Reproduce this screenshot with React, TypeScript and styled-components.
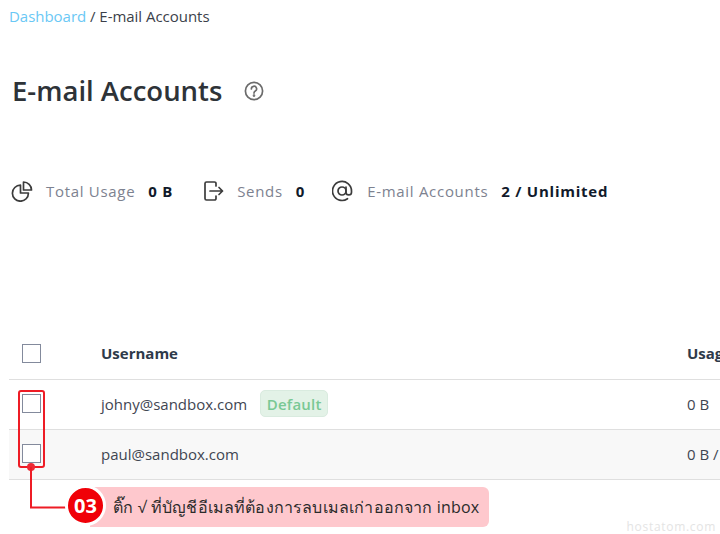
import React from "react";
import styled, { createGlobalStyle } from "styled-components";

const Global = createGlobalStyle`
  html, body { margin: 0; padding: 0; background: #fff; }
  body { font-family: "Open Sans", sans-serif; color: #2e3238; }
  * { box-sizing: border-box; }
`;

const Page = styled.div`
  position: relative;
  width: 720px;
  height: 534px;
  overflow: hidden;
  padding: 6px 0 0 9px;
`;
const Crumbs = styled.div`
  font-size: 15px;
  line-height: 20px;
  letter-spacing: -0.03px;
  color: #3b3f4a;
`;
const CrumbLink = styled.a`
  color: #6ac8f5;
`;
const TitleRow = styled.div`
  display: flex;
  align-items: center;
  gap: 22px;
  margin: 45px 0 0 3px;
  height: 40px;
`;
const Title = styled.h1`
  margin: 0;
  font-size: 27.5px;
  font-weight: 600;
  line-height: 40px;
  color: #2e3338;
`;
const HelpIcon = styled.svg`
  width: 20px;
  height: 20px;
  color: #6b6b6b;
`;
const Stats = styled.div`
  display: flex;
  align-items: center;
  margin: 68px 0 0 2px;
  height: 24px;
  font-size: 15px;
  letter-spacing: 0.7px;
`;
const Stat = styled.div<{ $gap: number }>`
  display: flex;
  align-items: center;
  margin-right: ${(p) => p.$gap}px;
`;
const StatIcon = styled.svg`
  width: 22px;
  height: 22px;
  color: #3c3c3c;
  margin-right: 13px;
  flex: none;
`;
const StatLabel = styled.span`
  color: #7d8290;
  margin-right: 13px;
`;
const StatValue = styled.b`
  font-weight: 700;
  font-size: 15px;
  letter-spacing: 0.75px;
  color: #111a2b;
`;
const Table = styled.div`
  width: 900px;
  margin-top: 126px;
  font-size: 15px;
`;
const Row = styled.div<{ $head?: boolean; $shaded?: boolean }>`
  display: grid;
  grid-template-columns: 92px 586px 1fr;
  align-items: center;
  height: ${(p) => (p.$head ? 51 : 50)}px;
  padding-bottom: 2px;
  border-bottom: 1px solid #dfdfdf;
  background: ${(p) => (p.$shaded ? "#f8f8f8" : "transparent")};
  font-weight: ${(p) => (p.$head ? 700 : 400)};
  color: ${(p) => (p.$head ? "#2e3a4a" : "#3f4652")};
`;
const CheckCell = styled.div`
  padding-left: 13px;
  display: flex;
`;
const Check = styled.span`
  width: 19px;
  height: 19px;
  border: 1px solid #838a9c;
  background: #fff;
  display: block;
`;
const UserCell = styled.div`
  display: flex;
  align-items: center;
  gap: 13px;
`;
const Badge = styled.span`
  height: 27px;
  width: 68px;
  justify-content: center;
  display: flex;
  align-items: center;
  border: 1px solid #d9ebdf;
  border-radius: 5px;
  background: #e3f2e7;
  color: #79c894;
  font-weight: 600;
  font-size: 15px;
  letter-spacing: 0.2px;
`;
const Highlight = styled.div`
  position: absolute;
  left: 18px;
  top: 390px;
  width: 27px;
  height: 78px;
  border: 2px solid #ee1c25;
  border-radius: 3px;
`;
const Connector = styled.svg`
  position: absolute;
  left: 24px;
  top: 460px;
  width: 50px;
  height: 52px;
`;
const Callout = styled.div`
  position: absolute;
  left: 90px;
  top: 487px;
  width: 399px;
  height: 40px;
  background: #fec8cd;
  border-radius: 0 6px 6px 0;
  display: flex;
  align-items: center;
  padding-left: 23px;
  font-size: 16px;
  letter-spacing: 0.16px;
  color: #2b2b2b;
  white-space: nowrap;
  font-family: "Open Sans", "Noto Sans", "DejaVu Sans", sans-serif;
`;
const Number = styled.div`
  position: absolute;
  left: 66px;
  top: 486px;
  width: 39px;
  height: 39px;
  border-radius: 50%;
  background: #f00008;
  border: 2px solid #fff;
  box-shadow: 0 0 0 1px #fff;
  color: #fff;
  font-size: 20px;
  font-weight: 700;
  display: flex;
  align-items: center;
  justify-content: center;
`;
const Watermark = styled.div`
  position: absolute;
  right: 4px;
  top: 518px;
  font-size: 12px;
  letter-spacing: 0.7px;
  color: #e4e4e4;
`;

export default function App() {
  return (
    <Page>
      <Global />
      <Crumbs>
        <CrumbLink>Dashboard</CrumbLink> / E-mail Accounts
      </Crumbs>
      <TitleRow>
        <Title>E-mail Accounts</Title>
        <HelpIcon viewBox="0 0 20 20" fill="none" stroke="currentColor" strokeWidth="1.7" strokeLinecap="round">
          <circle cx="10" cy="10" r="8.6" />
          <path d="M7.4 7.9a2.6 2.6 0 1 1 3.9 2.2c-.9.5-1.3 1-1.3 2" />
          <circle cx="10" cy="14.6" r="0.5" fill="currentColor" />
        </HelpIcon>
      </TitleRow>
      <Stats>
        <Stat $gap={29}>
          <StatIcon viewBox="0 0 22 22" fill="none" stroke="currentColor" strokeWidth="1.7" strokeLinejoin="round">
            <path d="M9.5 5.2A8 8 0 1 0 17.4 13H9.5z" />
            <path d="M12.5 2a8 8 0 0 1 8 8h-8z" />
          </StatIcon>
          <StatLabel>Total Usage</StatLabel>
          <StatValue>0 B</StatValue>
        </Stat>
        <Stat $gap={27}>
          <StatIcon viewBox="0 0 22 22" fill="none" stroke="currentColor" strokeWidth="1.7" strokeLinecap="round" strokeLinejoin="round">
            <path d="M14 6V3.500A1.500 1.500 0 0 0 12.500 2H4.500A1.500 1.500 0 0 0 3 3.500v15A1.500 1.500 0 0 0 4.500 20h8a1.500 1.500 0 0 0 1.500-1.500V16" />
            <path d="M8 11h12.500M17 7.500l3.500 3.500-3.500 3.500" />
          </StatIcon>
          <StatLabel>Sends</StatLabel>
          <StatValue>0</StatValue>
        </Stat>
        <Stat $gap={0}>
          <StatIcon viewBox="1 0 22 22" fill="none" stroke="currentColor" strokeWidth="1.7" strokeLinecap="round">
            <circle cx="11" cy="11" r="4" />
            <path d="M15 7v5.200a2.700 2.700 0 0 0 5.500 0V11a9.500 9.500 0 1 0-4 7.700" />
          </StatIcon>
          <StatLabel>E-mail Accounts</StatLabel>
          <StatValue>2 / Unlimited</StatValue>
        </Stat>
      </Stats>
      <Table>
        <Row $head>
          <CheckCell><Check /></CheckCell>
          <div>Username</div>
          <div>Usage</div>
        </Row>
        <Row>
          <CheckCell><Check /></CheckCell>
          <UserCell>johny@sandbox.com<Badge>Default</Badge></UserCell>
          <div>0 B</div>
        </Row>
        <Row $shaded>
          <CheckCell><Check /></CheckCell>
          <UserCell>paul@sandbox.com</UserCell>
          <div>0 B / Unlimited</div>
        </Row>
      </Table>
      <Highlight />
      <Connector viewBox="0 0 50 52" fill="none">
        <circle cx="7" cy="7" r="4" fill="#ee2a35" />
        <path d="M7 7v40.500h43" stroke="#ee1c25" strokeWidth="2" />
      </Connector>
      <Callout>ติ๊ก √ ที่บัญชีอีเมลที่ต้องการลบเมลเก่าออกจาก inbox</Callout>
      <Number>03</Number>
      <Watermark>hostatom.com</Watermark>
    </Page>
  );
}
